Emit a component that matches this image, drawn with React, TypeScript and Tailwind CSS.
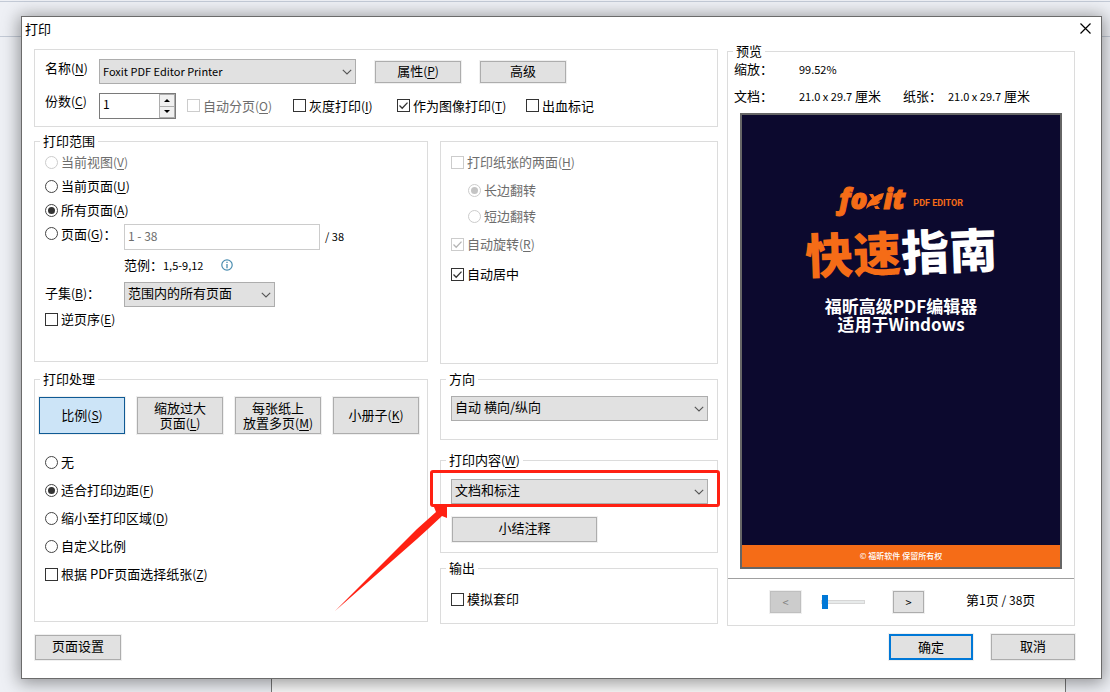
import React, { useState } from 'react';

// Renders a caption such as "名称(N)" with its access key underlined
const Caption: React.FC<{ text: string }> = ({ text }) => {
  const match = text.match(/^(.*)\(([A-Z])\)(.*)$/);
  if (!match) return <>{text}</>;
  return (
    <>
      {match[1]}
      <span className="text-[12px]">(<u className="underline-offset-2">{match[2]}</u>)</span>
      {match[3]}
    </>
  );
};

interface OptionProps {
  text: string;
  checked?: boolean;
  disabled?: boolean;
  className?: string;
}

const CheckOption: React.FC<OptionProps> = ({ text, checked = false, disabled, className = 'h-7' }) => (
  <label className={`flex items-center gap-[3px] whitespace-nowrap ${disabled ? 'text-[#6d6d6d]' : ''} ${className}`}>
    <span className="relative flex">
      <input
        type="checkbox"
        defaultChecked={checked}
        disabled={disabled}
        className="peer size-[13px] appearance-none border border-[#333] bg-white disabled:border-[#ccc]"
      />
      <svg
        viewBox="0 0 13 13"
        className="pointer-events-none absolute inset-0 hidden size-[13px] text-[#333] peer-checked:block peer-disabled:text-[#b5b5b5]"
      >
        <path d="M2.5 6.5 L5.2 9.2 L10.5 3.6" fill="none" stroke="currentColor" strokeWidth="1.3" />
      </svg>
    </span>
    <span><Caption text={text} /></span>
  </label>
);

const RadioOption: React.FC<OptionProps & { name: string }> = ({ name, text, checked = false, disabled, className = 'h-7' }) => (
  <label className={`flex items-center gap-[3px] whitespace-nowrap ${disabled ? 'text-[#6d6d6d]' : ''} ${className}`}>
    <input
      type="radio"
      name={name}
      defaultChecked={checked}
      disabled={disabled}
      className="grid size-[13px] appearance-none place-items-center rounded-full border border-[#444] bg-white before:size-[7px] before:rounded-full checked:before:bg-[#333] disabled:border-[#ccc] disabled:checked:before:bg-[#c4c4c4]"
    />
    <span><Caption text={text} /></span>
  </label>
);

const Dropdown: React.FC<{ id?: string; label?: string; value: string; className?: string; textClass?: string }> = ({
  id,
  label,
  value,
  className = '',
  textClass = 'pb-1',
}) => (
  <div className={`relative ${className}`}>
    <select
      id={id}
      aria-label={label}
      className={`block h-[25px] w-full appearance-none border border-[#adadad] bg-[#e1e1e1] pr-6 pl-[3px] ${textClass}`}
    >
      <option>{value}</option>
    </select>
    <svg viewBox="0 0 10 6" className="pointer-events-none absolute top-[10px] right-1 h-[6px] w-[10px]">
      <path d="M0.8 0.8 L5 5 L9.2 0.8" fill="none" stroke="#555" strokeWidth="1.1" />
    </svg>
  </div>
);

const PushButton: React.FC<React.ButtonHTMLAttributes<HTMLButtonElement>> = ({ className = '', ...props }) => (
  <button
    type="button"
    className={`border border-[#adadad] bg-[#e1e1e1] leading-[15px] outline outline-[#f0f0f0] ${className}`}
    {...props}
  />
);

const Group: React.FC<{ title?: string; className?: string; children: React.ReactNode }> = ({ title, className = '', children }) => (
  <fieldset className={`min-w-0 border border-[#dcdcdc] ${className}`}>
    {title && (
      <legend className="ml-[5px] px-[3px] leading-[18px]">
        <Caption text={title} />
      </legend>
    )}
    {children}
  </fieldset>
);

const FoxitLogo = () => (
  <div className="flex items-baseline font-['Open_Sans',sans-serif] text-[28px] leading-7 font-extrabold text-[#f56c17] italic [-webkit-text-stroke:1px_#f56c17]">
    <span>fo</span>
    <svg viewBox="0 0 18 16" className="-mx-px h-4 w-[18px]" fill="currentColor">
      <path d="M3 1 H7 L9 4.5 L6.5 6.5 Z" />
      <path d="M18 0 C11 1 5 5 1 12 L0 16 C2 14 4 13 6 12.5 C10 12.5 13 11 14.5 8.5 L12 8.5 L16 6 C17 4 17.5 2 18 0 Z" />
      <path d="M8 13.5 L11.5 12.5 L14 16 H9.5 Z" />
    </svg>
    <span>it</span>
  </div>
);

const processingModes = ['比例(S)', '缩放过大\n页面(L)', '每张纸上\n放置多页(M)', '小册子(K)'];

const App: React.FC = () => {
  const [copies, setCopies] = useState(1);
  const [mode, setMode] = useState(0);
  const [page, setPage] = useState(1);

  return (
    <div className="relative min-h-screen overflow-hidden bg-[#eef0f5] pt-4 pr-2 pb-3 pl-[21px] font-['Noto_Sans_CJK_SC',sans-serif] text-[13px] leading-[18px] text-black">
      {/* Application window behind the dialog */}
      <div className="absolute inset-0 flex flex-col">
        <div className="h-[2px] border-b border-[#c3cad6]" />
        <div className="h-[35px] border-b border-[#c3cad6]" />
        <div className="mr-[44px] ml-[271px] flex-1 border-x border-[#777] bg-[#fafafa]" />
      </div>

      <div
        role="dialog"
        aria-label="打印"
        className="relative border border-[#6b6b6b] bg-white shadow-[0_2px_16px_2px_rgba(0,0,0,0.4)]"
      >
        <header className="flex h-[25px] items-center justify-between pr-[10px] pb-[2px] pl-[3px]">
          <h1>打印</h1>
          <button type="button" aria-label="关闭">
            <svg viewBox="0 0 11 11" className="size-[11px]">
              <path d="M0.5 0.5 L10.5 10.5 M10.5 0.5 L0.5 10.5" stroke="#000" strokeWidth="1.2" />
            </svg>
          </button>
        </header>

        <div className="flex gap-[9px] pr-[26px] pl-3">
          <div className="min-w-0 flex-1">
            <Group className="mt-[7px] px-[10px] pt-[9px] pb-[7px]">
              <div className="flex">
                <label htmlFor="printer" className="w-[54px]"><Caption text="名称(N)" /></label>
                <Dropdown id="printer" value="Foxit PDF Editor Printer" className="w-[257px]" textClass="pb-[2px] text-[11px]" />
                <PushButton className="ml-[19px] h-[22px] w-[86px] self-center pb-[2px]"><Caption text="属性(P)" /></PushButton>
                <PushButton className="ml-[19px] h-[22px] w-[86px] self-center pb-[2px]">高级</PushButton>
              </div>
              <div className="mt-[9px] flex">
                <label htmlFor="copies" className="w-[54px] leading-4"><Caption text="份数(C)" /></label>
                <div className="mr-[11px] flex h-[26px] w-[77px] border border-[#7a7a7a]">
                  <input
                    id="copies"
                    value={copies}
                    onChange={(e) => setCopies(Number(e.target.value) || 1)}
                    className="min-w-0 flex-1 pb-1 pl-[3px] text-[12px] outline-none"
                  />
                  <div className="flex w-4 flex-col border border-[#adadad]">
                    <button type="button" aria-label="增加" onClick={() => setCopies(copies + 1)} className="flex flex-1 items-center justify-center border-b border-[#adadad] bg-[#f0f0f0]">
                      <svg viewBox="0 0 6 3" className="h-[3px] w-[6px]"><path d="M0 3 L3 0 L6 3 Z" /></svg>
                    </button>
                    <button type="button" aria-label="减少" onClick={() => setCopies(Math.max(1, copies - 1))} className="flex flex-1 items-center justify-center bg-[#f0f0f0]">
                      <svg viewBox="0 0 6 3" className="h-[3px] w-[6px]"><path d="M0 0 L3 3 L6 0 Z" /></svg>
                    </button>
                  </div>
                </div>
                <div className="grid grid-cols-[106px_104px_129px_auto]">
                  <CheckOption text="自动分页(O)" disabled className="h-[25px]" />
                  <CheckOption text="灰度打印(I)" className="h-[25px]" />
                  <CheckOption text="作为图像打印(T)" checked className="h-[25px]" />
                  <CheckOption text="出血标记" className="h-[25px]" />
                </div>
              </div>
            </Group>

            <div className="mt-[5px] flex gap-3">
              <div className="min-w-0 flex-1">
                <Group title="打印范围" className="pb-[30px]">
                  <div className="px-[10px]">
                    <RadioOption name="range" text="当前视图(V)" disabled className="h-6" />
                    <RadioOption name="range" text="当前页面(U)" className="h-6" />
                    <RadioOption name="range" text="所有页面(A)" checked className="h-6" />
                    <div className="flex">
                      <div className="w-[79px]">
                        <RadioOption name="range" text="页面(G)：" className="h-[23px]" />
                      </div>
                      <input
                        aria-label="页面范围"
                        placeholder="1 - 38"
                        className="mt-[2px] mr-[5px] h-[26px] w-[196px] border border-[#ccc] pb-1 pl-[3px] text-[12px] placeholder:text-[#6d6d6d]"
                      />
                      <span className="self-center text-[11px]">/ 38</span>
                    </div>
                    <div className="mt-[3px] flex h-6 items-center gap-[18px] pl-[79px]">
                      <span>范例：<span className="text-[11px]">1,5-9,12</span></span>
                      <svg viewBox="0 0 12 12" className="size-3" fill="none" stroke="#4a8db0">
                        <circle cx="6" cy="6" r="5.2" strokeWidth="1.2" />
                        <path d="M6 2.7 V4 M6 5 V9.3" strokeWidth="1.3" />
                      </svg>
                    </div>
                    <div className="mt-[5px] flex">
                      <label htmlFor="subset" className="w-[79px] leading-[22px]"><Caption text="子集(B)：" /></label>
                      <Dropdown id="subset" value="范围内的所有页面" className="w-[151px]" />
                    </div>
                    <CheckOption text="逆页序(E)" className="h-6" />
                  </div>
                </Group>

                <Group title="打印处理" className="mt-2 pb-[33px]">
                  <div className="flex gap-3 px-1 pt-[9px]">
                    {processingModes.map((text, i) => (
                      <PushButton
                        key={text}
                        onClick={() => setMode(i)}
                        className={`h-[37px] w-[86px] pb-[2px] ${mode === i ? 'border-[#0f5a94]! bg-[#cce4f7]!' : ''}`}
                      >
                        {text.split('\n').map((line) => (
                          <span key={line} className="block"><Caption text={line} /></span>
                        ))}
                      </PushButton>
                    ))}
                  </div>
                  <div className="mt-[14px] px-[10px]">
                    <RadioOption name="scale" text="无" />
                    <RadioOption name="scale" text="适合打印边距(F)" checked />
                    <RadioOption name="scale" text="缩小至打印区域(D)" />
                    <RadioOption name="scale" text="自定义比例" />
                    <CheckOption text="根据 PDF页面选择纸张(Z)" />
                  </div>
                </Group>
              </div>

              <div className="w-[278px]">
                <Group className="mt-[9px] px-[10px] pt-[6px] pb-[75px]">
                  <CheckOption text="打印纸张的两面(H)" disabled />
                  <div className="pl-[17px]">
                    <RadioOption name="duplex" text="长边翻转" checked disabled />
                    <RadioOption name="duplex" text="短边翻转" disabled className="h-6" />
                  </div>
                  <CheckOption text="自动旋转(R)" checked disabled className="h-8" />
                  <CheckOption text="自动居中" checked />
                </Group>

                <Group title="方向" className="mt-[6px] pb-[18px]">
                  <Dropdown label="方向" value="自动 横向/纵向" className="mx-[10px] mt-2 w-[257px]" />
                </Group>

                <Group title="打印内容(W)" className="mt-[11px] pb-[10px]">
                  <div className="relative mx-[10px] mt-[10px] w-[257px]">
                    <Dropdown label="打印内容" value="文档和标注" />
                    <div className="pointer-events-none absolute -top-[9px] -right-3 -bottom-[3px] -left-[21px] rounded-[3px] border-3 border-[#ff2113]" />
                    <svg viewBox="0 0 112 104" className="pointer-events-none absolute top-[28px] right-[261px] h-[104px] w-[112px]" fill="#ff2113">
                      <path d="M0 104 L82 22 L101 5 L99 0 H112 V11 L107 9 L93 22 L82 32 Z" />
                    </svg>
                  </div>
                  <PushButton className="mt-[13px] ml-[11px] block h-[25px] w-[145px] pb-1">小结注释</PushButton>
                </Group>

                <Group title="输出" className="mt-[6px] pb-[10px]">
                  <div className="px-[10px] pt-2">
                    <CheckOption text="模拟套印" />
                  </div>
                </Group>
              </div>
            </div>
          </div>

          <Group title="预览" className="w-[348px] self-start">
            <div className="flex px-[6px]">
              <span className="w-[65px]">缩放：</span>
              <span className="text-[11px]">99.52%</span>
            </div>
            <div className="mt-[9px] flex px-[6px]">
              <span className="w-[65px]">文档：</span>
              <span className="w-[104px]"><span className="text-[11px]">21.0 x 29.7</span> 厘米</span>
              <span className="w-[45px]">纸张：</span>
              <span><span className="text-[11px]">21.0 x 29.7</span> 厘米</span>
            </div>

            <div className="mx-3 mt-2 flex h-[456px] flex-col items-center border-2 border-[#666] bg-[#0c092e] text-white">
              <div className="mt-[69px] flex items-end gap-2">
                <FoxitLogo />
                <span className="pb-[3px] font-['Roboto',sans-serif] text-[9px] leading-[12px] font-bold text-[#f56c17]">PDF EDITOR</span>
              </div>
              <h2 className="mt-[10px] -rotate-2 text-[48px] leading-[56px] font-black">
                <span className="text-[#f56c17]">快速</span>指南
              </h2>
              <p className="mt-[19px] text-center text-[17px] leading-[18px] font-bold">
                福昕高级PDF编辑器
                <br />
                适用于Windows
              </p>
              <div className="mt-auto w-full bg-[#f56c17] text-center text-[8px] leading-[22px] font-medium">© 福昕软件 保留所有权</div>
            </div>

            <div className="mt-[9px] flex h-[47px] items-center border-t border-[#a0a0a0] pl-[42px]">
              <PushButton
                disabled={page === 1}
                onClick={() => setPage(page - 1)}
                className="h-[22px] w-[31px] text-[11px] disabled:border-[#bfbfbf] disabled:bg-[#ccc] disabled:text-[#838383]"
              >
                &lt;
              </PushButton>
              <input
                type="range"
                aria-label="页码"
                min={1}
                max={38}
                value={page}
                onChange={(e) => setPage(Number(e.target.value))}
                className="mr-7 ml-5 h-[14px] w-11 appearance-none bg-transparent [&::-webkit-slider-runnable-track]:h-1 [&::-webkit-slider-runnable-track]:border [&::-webkit-slider-runnable-track]:border-[#d6d6d6] [&::-webkit-slider-runnable-track]:bg-[#e7eaea] [&::-webkit-slider-thumb]:-mt-[6px] [&::-webkit-slider-thumb]:h-[14px] [&::-webkit-slider-thumb]:w-[6px] [&::-webkit-slider-thumb]:appearance-none [&::-webkit-slider-thumb]:bg-[#0078d7]"
              />
              <PushButton onClick={() => setPage(Math.min(38, page + 1))} className="h-[22px] w-[31px] text-[11px]">&gt;</PushButton>
              <span className="ml-[42px] pb-1">第<span className="text-[12px]">{page}</span>页 <span className="text-[12px]">/ 38</span>页</span>
            </div>
          </Group>
        </div>

        <footer className="mt-2 flex items-center gap-[18px] pr-[26px] pb-[18px] pl-[13px]">
          <PushButton className="mr-auto h-[25px] w-[86px] pb-1">页面设置</PushButton>
          <PushButton className="h-[26px] w-[84px] border-2! border-[#0078d7]! pb-[2px]">确定</PushButton>
          <PushButton className="h-[26px] w-[84px] pb-1">取消</PushButton>
        </footer>
      </div>
    </div>
  );
};

export default App;
